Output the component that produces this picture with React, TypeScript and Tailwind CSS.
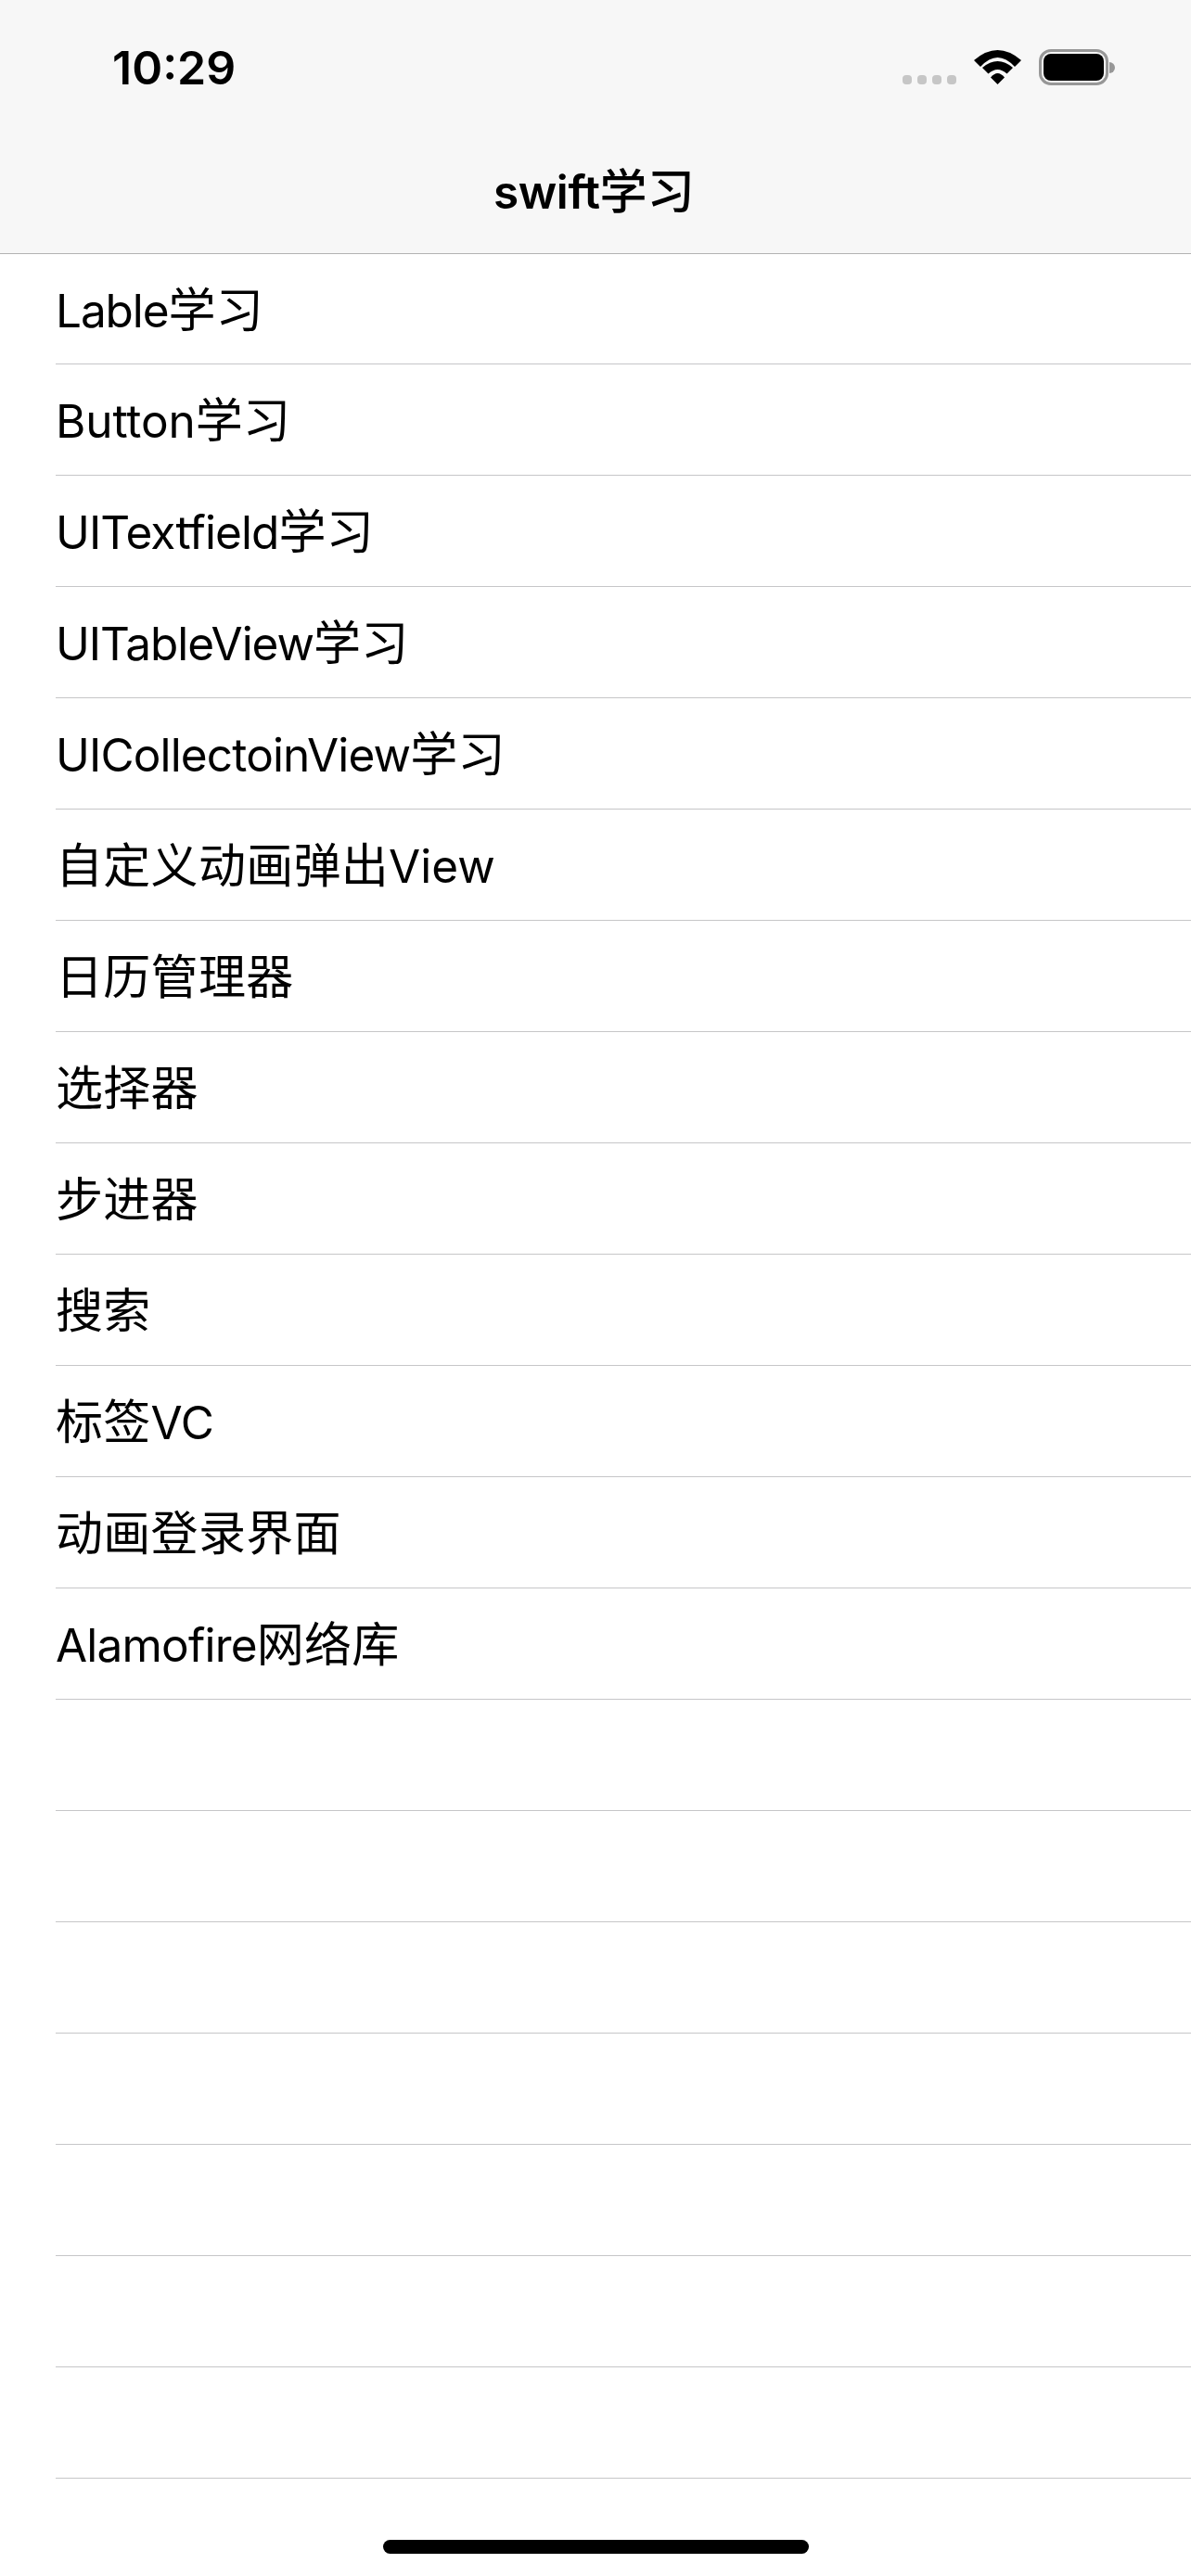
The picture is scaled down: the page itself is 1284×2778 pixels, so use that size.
// latin tracking differs per row, Inter's narrow letters are wider than the iOS font
const items = [
  { text: 'Lable学习', latin: 'tracking-[-1.1px]' },
  { text: 'Button学习', latin: 'tracking-[-0.1px]' },
  { text: 'UITextfield学习', latin: 'tracking-[-0.9px]' },
  { text: 'UITableView学习', latin: 'tracking-[-1.05px]' },
  { text: 'UICollectoinView学习', latin: 'tracking-[-0.85px]' },
  { text: '自定义动画弹出View', latin: 'tracking-[0px]' },
  { text: '日历管理器', latin: '' },
  { text: '选择器', latin: '' },
  { text: '步进器', latin: '' },
  { text: '搜索', latin: '' },
  { text: '标签VC', latin: 'tracking-[-0.4px]' },
  { text: '动画登录界面', latin: '' },
  { text: 'Alamofire网络库', latin: 'tracking-[-0.8px]' },
  { text: '', latin: '' },
  { text: '', latin: '' },
  { text: '', latin: '' },
  { text: '', latin: '' },
  { text: '', latin: '' },
  { text: '', latin: '' },
  { text: '', latin: '' },
]

function Mixed({ text, latin, title }: { text: string; latin: string; title?: boolean }) {
  const parts = text.match(/[A-Za-z]+|[^A-Za-z]+/g) ?? []
  return (
    <>
      {parts.map((part, i) =>
        /[A-Za-z]/.test(part) ? (
          <span key={i} className={`text-[49.5px] ${latin} ${title ? 'font-semibold' : ''}`}>
            {part}
          </span>
        ) : (
          <span key={i} className={title ? 'tracking-[0.3px] font-medium' : 'tracking-[0.3px]'}>
            {part}
          </span>
        )
      )}
    </>
  )
}

function Wifi() {
  return (
    <svg width="51" height="37" viewBox="0 0 51 37" fill="#000">
      <path d="M0 11 Q25.500 -11 51 11 L44 18 Q25.500 -2 7 18 Z" />
      <path d="M9 19 Q25.500 5 42 19 L35.500 25.500 Q25.500 16.500 15.500 25.500 Z" />
      <path d="M18 29.500 Q25.500 20.500 33 29.500 L25.500 37 Z" />
    </svg>
  )
}

function Battery() {
  return (
    <div className="flex items-center">
      <div className="w-[75px] h-[39px] rounded-[13px] border-[3px] border-[#979797] p-[2px]">
        <div className="w-full h-full rounded-[8px] bg-black" />
      </div>
      <div className="w-[6px] h-[12px] ml-[1px] rounded-r-full bg-[#979797]" />
    </div>
  )
}

export default function App() {
  return (
    <div className="w-[1284px] h-[2778px] overflow-hidden bg-white text-black font-['Inter','Noto_Sans_CJK_SC',sans-serif] relative">
      <header className="h-[274px] bg-[#f7f7f7] border-b border-[#b2b2b2]">
        <div className="h-[132px] pl-[121px] pr-[82px] pt-[42px] flex justify-between items-start">
          <span className="text-[50px] leading-[62px] font-semibold">10:29</span>
          <div className="flex items-start pt-[11px]">
            <div className="flex gap-[6px] mt-[28px] mr-[19px]">
              <span className="w-[10px] h-[10px] rounded-[4px] bg-[#c6c6c6]" />
              <span className="w-[10px] h-[10px] rounded-[4px] bg-[#c6c6c6]" />
              <span className="w-[10px] h-[10px] rounded-[4px] bg-[#c6c6c6]" />
              <span className="w-[10px] h-[10px] rounded-[4px] bg-[#c6c6c6]" />
            </div>
            <div className="mt-[1px] mr-[19px]"><Wifi /></div>
            <Battery />
          </div>
        </div>
        <h1 className="text-center text-[51px] leading-[142px] h-[141px] pt-[4px] pr-[3px]">
          <Mixed text="swift学习" latin="tracking-[-0.4px]" title />
        </h1>
      </header>
      <ul>
        {items.map((item, i) => (
          <li key={i} className="ml-[60px] border-b border-[#c6c6c8] h-[120px] first:h-[119px] pt-[4px] flex items-center text-[51px]">
            <div><Mixed text={item.text} latin={item.latin} /></div>
          </li>
        ))}
      </ul>
      <div className="absolute left-[413px] top-[2739px] w-[459px] h-[15px] rounded-full bg-black" />
    </div>
  )
}
